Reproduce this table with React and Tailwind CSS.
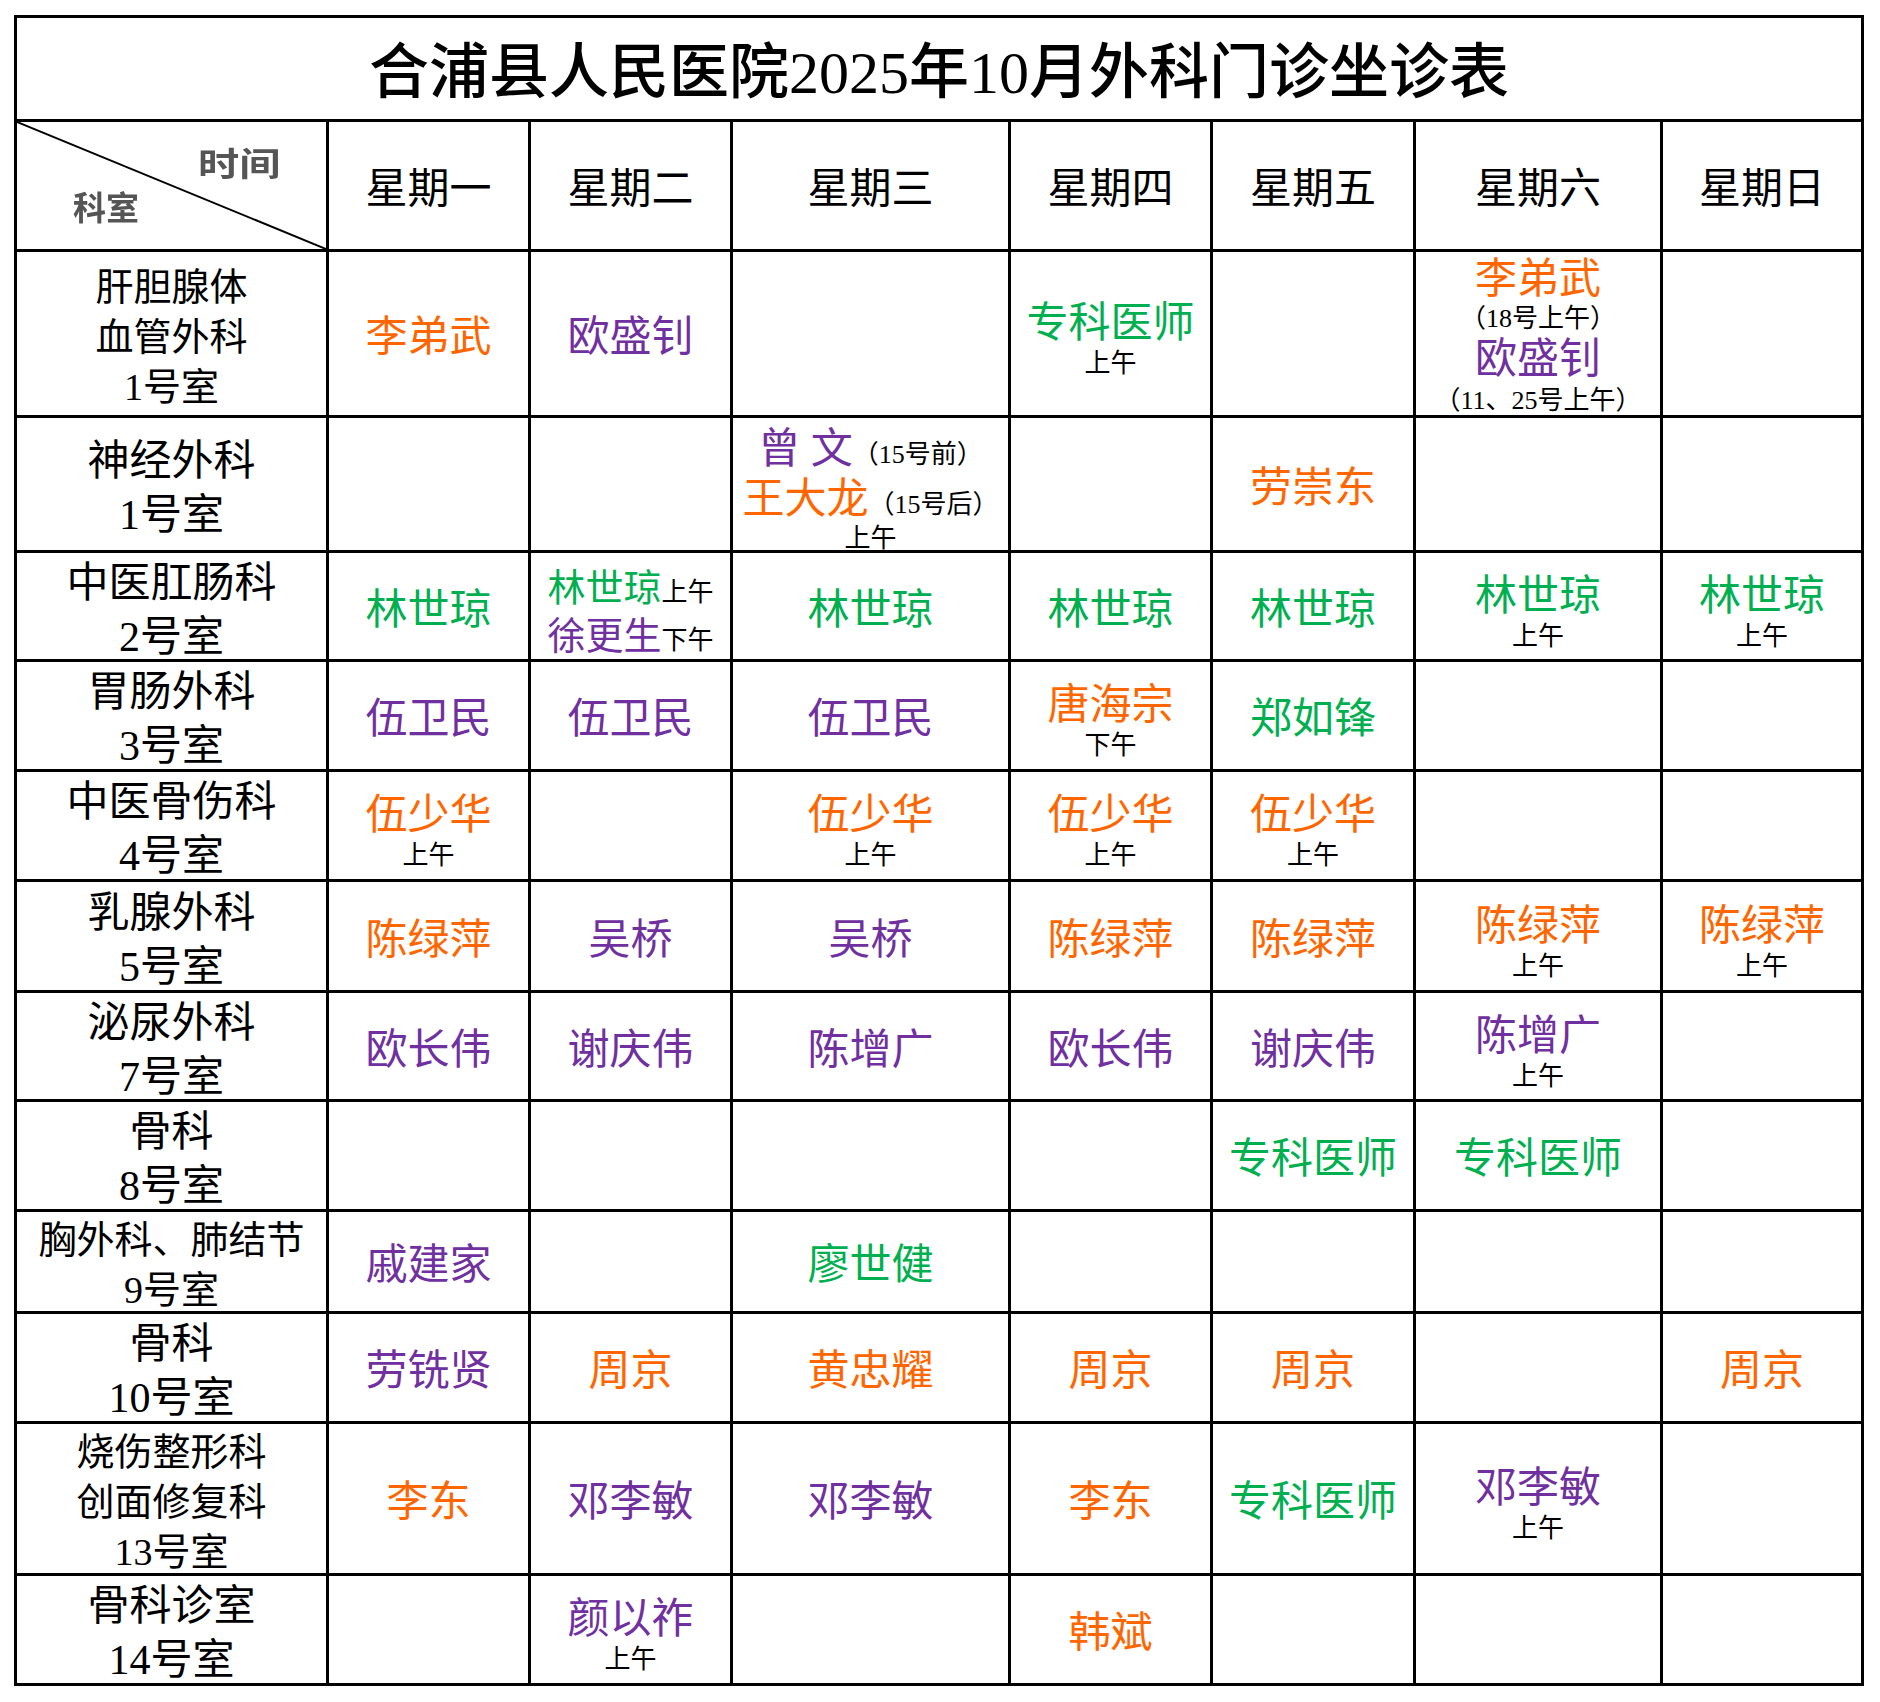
import React from 'react';

const O = 'text-[#ff6600]';
const P = 'text-[#7030a0]';
const G = 'text-[#00b050]';

function N({ c, children }) {
  return <div className={`${c} text-[42px] leading-[52px] whitespace-nowrap`}>{children}</div>;
}

function Pair({ c, name, t = '上午' }) {
  return (
    <div className="flex flex-col items-center pt-[2px]">
      <div className={`${c} text-[42px] leading-[52px] h-[52px] whitespace-nowrap`}>{name}</div>
      <div className="text-[26px] leading-[30px] h-[30px] text-black whitespace-nowrap">{t}</div>
    </div>
  );
}

const days = ['星期一', '星期二', '星期三', '星期四', '星期五', '星期六', '星期日'];

const rows = [
  {
    label: ['肝胆腺体', '血管外科', '1号室'],
    small: true,
    cells: [
      <N c={O}>李弟武</N>,
      <N c={P}>欧盛钊</N>,
      null,
      <Pair c={G} name="专科医师" />,
      null,
      <div className="flex flex-col items-center pt-[6px]">
        <div className={`${O} text-[42px] leading-[40px] h-[40px]`}>李弟武</div>
        <div className="text-[26px] leading-[40px] h-[40px] text-black whitespace-nowrap">（18号上午）</div>
        <div className={`${P} text-[42px] leading-[40px] h-[42px]`}>欧盛钊</div>
        <div className="text-[26px] leading-[40px] h-[40px] text-black whitespace-nowrap">（11、25号上午）</div>
      </div>,
      null,
    ],
  },
  {
    label: ['神经外科', '1号室'],
    cells: [
      null,
      null,
      <div className="flex flex-col items-center pt-[2px]">
        <div className="flex items-baseline justify-center h-[50px] leading-[50px] whitespace-nowrap">
          <span className={`${P} text-[42px]`}>曾 文</span>
          <span className="text-[26px] text-black">（15号前）</span>
        </div>
        <div className="flex items-baseline justify-center h-[50px] leading-[50px] whitespace-nowrap">
          <span className={`${O} text-[42px]`}>王大龙</span>
          <span className="text-[26px] text-black">（15号后）</span>
        </div>
        <div className="text-[26px] leading-[30px] h-[30px] text-black">上午</div>
      </div>,
      null,
      <N c={O}>劳崇东</N>,
      null,
      null,
    ],
  },
  {
    label: ['中医肛肠科', '2号室'],
    cells: [
      <N c={G}>林世琼</N>,
      <div className="flex flex-col items-center pt-[4px]">
        <div className="flex items-baseline justify-center h-[48px] leading-[48px] whitespace-nowrap">
          <span className={`${G} text-[38px]`}>林世琼</span>
          <span className="text-[26px] text-black">上午</span>
        </div>
        <div className="flex items-baseline justify-center h-[48px] leading-[48px] whitespace-nowrap">
          <span className={`${P} text-[38px]`}>徐更生</span>
          <span className="text-[26px] text-black">下午</span>
        </div>
      </div>,
      <N c={G}>林世琼</N>,
      <N c={G}>林世琼</N>,
      <N c={G}>林世琼</N>,
      <Pair c={G} name="林世琼" />,
      <Pair c={G} name="林世琼" />,
    ],
  },
  {
    label: ['胃肠外科', '3号室'],
    cells: [
      <N c={P}>伍卫民</N>,
      <N c={P}>伍卫民</N>,
      <N c={P}>伍卫民</N>,
      <Pair c={O} name="唐海宗" t="下午" />,
      <N c={G}>郑如锋</N>,
      null,
      null,
    ],
  },
  {
    label: ['中医骨伤科', '4号室'],
    cells: [
      <Pair c={O} name="伍少华" />,
      null,
      <Pair c={O} name="伍少华" />,
      <Pair c={O} name="伍少华" />,
      <Pair c={O} name="伍少华" />,
      null,
      null,
    ],
  },
  {
    label: ['乳腺外科', '5号室'],
    cells: [
      <N c={O}>陈绿萍</N>,
      <N c={P}>吴桥</N>,
      <N c={P}>吴桥</N>,
      <N c={O}>陈绿萍</N>,
      <N c={O}>陈绿萍</N>,
      <Pair c={O} name="陈绿萍" />,
      <Pair c={O} name="陈绿萍" />,
    ],
  },
  {
    label: ['泌尿外科', '7号室'],
    cells: [
      <N c={P}>欧长伟</N>,
      <N c={P}>谢庆伟</N>,
      <N c={P}>陈增广</N>,
      <N c={P}>欧长伟</N>,
      <N c={P}>谢庆伟</N>,
      <Pair c={P} name="陈增广" />,
      null,
    ],
  },
  {
    label: ['骨科', '8号室'],
    cells: [null, null, null, null, <N c={G}>专科医师</N>, <N c={G}>专科医师</N>, null],
  },
  {
    label: ['胸外科、肺结节', '9号室'],
    small: true,
    cells: [<N c={P}>戚建家</N>, null, <N c={G}>廖世健</N>, null, null, null, null],
  },
  {
    label: ['骨科', '10号室'],
    cells: [
      <N c={P}>劳铣贤</N>,
      <N c={O}>周京</N>,
      <N c={O}>黄忠耀</N>,
      <N c={O}>周京</N>,
      <N c={O}>周京</N>,
      null,
      <N c={O}>周京</N>,
    ],
  },
  {
    label: ['烧伤整形科', '创面修复科', '13号室'],
    small: true,
    cells: [
      <N c={O}>李东</N>,
      <N c={P}>邓李敏</N>,
      <N c={P}>邓李敏</N>,
      <N c={O}>李东</N>,
      <N c={G}>专科医师</N>,
      <Pair c={P} name="邓李敏" />,
      null,
    ],
  },
  {
    label: ['骨科诊室', '14号室'],
    cells: [null, <Pair c={P} name="颜以祚" />, null, <N c={O}>韩斌</N>, null, null, null],
  },
];

const cellCls =
  'bg-white flex flex-col items-center justify-center text-center pt-[7px] overflow-visible min-w-0';

export default function App() {
  return (
    <div className="w-[1880px] min-h-[1702px] bg-white font-['Liberation_Serif','Noto_Sans_CJK_SC',serif] text-black">
      <div className="pl-[14px] pt-[15px]">
        <div className="grid w-[1850px] bg-black p-[3px] gap-[3px] grid-cols-[309px_199px_199px_275px_199px_200px_244px_198px] grid-rows-[101px_127px_163px_132px_106px_107px_107px_108px_106px_107px_99px_107px_149px_107px]">
          <div className="col-span-8 bg-white flex items-center justify-center pt-[9px]">
            <div className="text-[60px] leading-[70px] font-medium whitespace-nowrap">
              合浦县人民医院2025年10月外科门诊坐诊表
            </div>
          </div>

          <div className="bg-white relative overflow-hidden">
            <svg className="absolute inset-0 w-full h-full" preserveAspectRatio="none" viewBox="0 0 309 127">
              <line x1="0" y1="0" x2="309" y2="127" stroke="#000" strokeWidth="2" />
            </svg>
            <span className="absolute left-[181px] top-[24px] text-[33px] leading-[33px] font-bold text-[#555555] font-['Noto_Sans_CJK_SC',sans-serif] origin-left scale-x-125 blur-[0.6px] whitespace-nowrap">
              时间
            </span>
            <span className="absolute left-[56px] top-[68px] text-[33px] leading-[33px] font-bold text-[#555555] font-['Noto_Sans_CJK_SC',sans-serif] blur-[0.6px] whitespace-nowrap">
              科室
            </span>
          </div>
          {days.map((d) => (
            <div key={d} className={cellCls}>
              <div className="text-[42px] leading-[50px] whitespace-nowrap">{d}</div>
            </div>
          ))}

          {rows.map((r, i) => (
            <React.Fragment key={i}>
              <div className={cellCls}>
                {r.label.map((l) => (
                  <div
                    key={l}
                    className={
                      r.small
                        ? 'text-[38px] leading-[50px] whitespace-nowrap'
                        : 'text-[42px] leading-[54px] whitespace-nowrap'
                    }
                  >
                    {l}
                  </div>
                ))}
              </div>
              {r.cells.map((c, j) => (
                <div key={j} className={cellCls}>
                  {c}
                </div>
              ))}
            </React.Fragment>
          ))}
        </div>
      </div>
    </div>
  );
}
